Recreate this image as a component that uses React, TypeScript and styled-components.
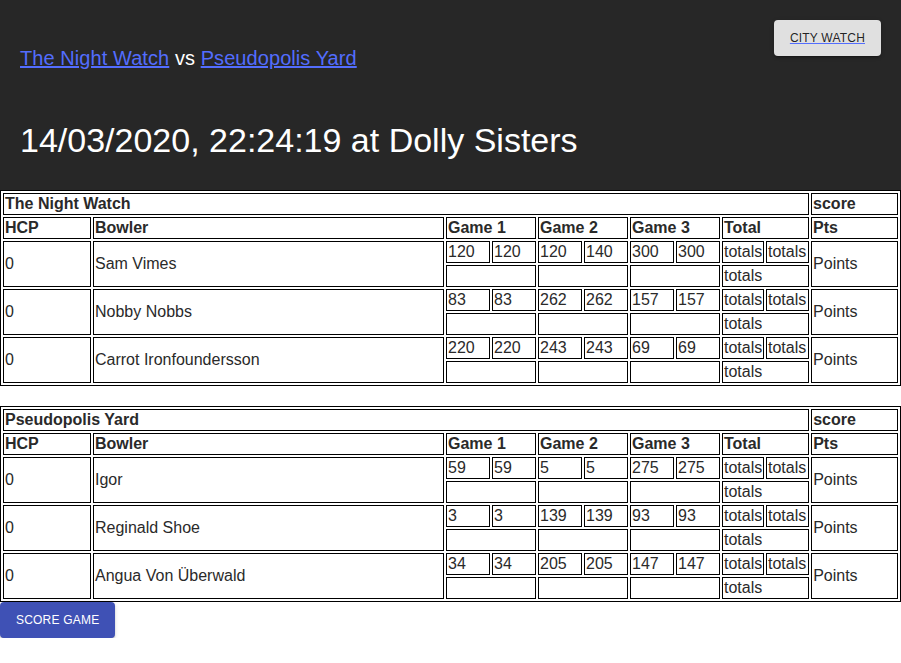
import React from "react";
import styled, { createGlobalStyle } from "styled-components";

const GlobalStyle = createGlobalStyle`
  html, body {
    margin: 0;
    padding: 0;
    background: #ffffff;
    font-family: "Liberation Sans", Arial, Helvetica, sans-serif;
  }
`;

const Header = styled.header`
  background: #272727;
  height: 190px;
  box-sizing: border-box;
  padding: 20px 20px 0 20px;
  display: flex;
  flex-direction: column;
`;

const TopRow = styled.div`
  display: flex;
  justify-content: space-between;
  align-items: flex-start;
`;

const MatchTitle = styled.h6`
  margin: 22px 0 0 0;
  font-size: 20px;
  line-height: 32px;
  font-weight: 400;
  letter-spacing: 0.07px;
  color: #ffffff;
`;

const TeamLink = styled.a`
  color: #536dfe;
  text-decoration: underline;
`;

const DateTitle = styled.h4`
  margin: 45px 0 0 0;
  font-size: 34px;
  line-height: 42px;
  font-weight: 400;
  color: #ffffff;
`;

const LightButton = styled.button`
  height: 36px;
  padding: 0 16px;
  border: none;
  border-radius: 4px;
  background: #e0e0e0;
  box-shadow: 0px 3px 1px -2px rgba(0, 0, 0, 0.2), 0px 2px 2px 0px rgba(0, 0, 0, 0.14),
    0px 1px 5px 0px rgba(0, 0, 0, 0.12);
  font-family: "Liberation Sans", Arial, sans-serif;
  font-size: 12px;
  letter-spacing: 0.2px;
  display: flex;
  align-items: center;
`;

const ButtonLink = styled.a`
  color: rgba(0, 0, 0, 0.87);
  text-decoration: underline;
  text-decoration-color: #536dfe;
`;

const PrimaryButton = styled.button`
  height: 36px;
  padding: 0 16px;
  border: none;
  border-radius: 4px;
  background: #3f51b5;
  color: #ffffff;
  box-shadow: 0px 3px 1px -2px rgba(0, 0, 0, 0.2), 0px 2px 2px 0px rgba(0, 0, 0, 0.14),
    0px 1px 5px 0px rgba(0, 0, 0, 0.12);
  font-family: "Liberation Sans", Arial, sans-serif;
  font-size: 12px;
  letter-spacing: 0.2px;
  display: flex;
  align-items: center;
`;

const ScoreTable = styled.table<{ $gap?: boolean }>`
  width: 100%;
  table-layout: fixed;
  border: 1px solid #000;
  border-spacing: 2px;
  margin-top: ${(p) => (p.$gap ? "20px" : "0")};
  font-size: 16px;
  color: #2a2a2a;
`;

const Head = styled.th`
  border: 1px solid #000;
  padding: 1px;
  text-align: left;
  font-weight: 700;
  line-height: 18px;
  white-space: nowrap;
  overflow: hidden;
`;

const Cell = styled.td`
  border: 1px solid #000;
  padding: 1px;
  line-height: 18px;
  height: 18px;
  white-space: nowrap;
  overflow: hidden;
`;

const colWidths = [88, 351, 44, 44, 44, 44, 44, 44, 42, 43, 87];

type Bowler = { name: string; games: [number, number][] };
type Team = { name: string; bowlers: Bowler[] };

const teams: Team[] = [
  {
    name: "The Night Watch",
    bowlers: [
      { name: "Sam Vimes", games: [[120, 120], [120, 140], [300, 300]] },
      { name: "Nobby Nobbs", games: [[83, 83], [262, 262], [157, 157]] },
      { name: "Carrot Ironfoundersson", games: [[220, 220], [243, 243], [69, 69]] },
    ],
  },
  {
    name: "Pseudopolis Yard",
    bowlers: [
      { name: "Igor", games: [[59, 59], [5, 5], [275, 275]] },
      { name: "Reginald Shoe", games: [[3, 3], [139, 139], [93, 93]] },
      { name: "Angua Von Überwald", games: [[34, 34], [205, 205], [147, 147]] },
    ],
  },
];

function TeamTable({ team, gap }: { team: Team; gap?: boolean }) {
  return (
    <ScoreTable $gap={gap}>
      <colgroup>
        {colWidths.map((w, i) => (
          <col key={i} style={{ width: w }} />
        ))}
      </colgroup>
      <thead>
        <tr>
          <Head colSpan={10}>{team.name}</Head>
          <Head>score</Head>
        </tr>
        <tr>
          <Head>HCP</Head>
          <Head>Bowler</Head>
          <Head colSpan={2}>Game 1</Head>
          <Head colSpan={2}>Game 2</Head>
          <Head colSpan={2}>Game 3</Head>
          <Head colSpan={2}>Total</Head>
          <Head>Pts</Head>
        </tr>
      </thead>
      <tbody>
        {team.bowlers.map((b) => (
          <React.Fragment key={b.name}>
            <tr>
              <Cell rowSpan={2}>0</Cell>
              <Cell rowSpan={2}>{b.name}</Cell>
              {b.games.map((g, gi) => (
                <React.Fragment key={gi}>
                  <Cell>{g[0]}</Cell>
                  <Cell>{g[1]}</Cell>
                </React.Fragment>
              ))}
              <Cell>totals</Cell>
              <Cell>totals</Cell>
              <Cell rowSpan={2}>Points</Cell>
            </tr>
            <tr>
              <Cell colSpan={2}></Cell>
              <Cell colSpan={2}></Cell>
              <Cell colSpan={2}></Cell>
              <Cell colSpan={2}>totals</Cell>
            </tr>
          </React.Fragment>
        ))}
      </tbody>
    </ScoreTable>
  );
}

export default function App() {
  return (
    <>
      <GlobalStyle />
      <Header>
        <TopRow>
          <MatchTitle>
            <TeamLink href="#">The Night Watch</TeamLink> vs{" "}
            <TeamLink href="#">Pseudopolis Yard</TeamLink>
          </MatchTitle>
          <LightButton>
            <ButtonLink href="#">CITY WATCH</ButtonLink>
          </LightButton>
        </TopRow>
        <DateTitle>14/03/2020, 22:24:19 at Dolly Sisters</DateTitle>
      </Header>
      <TeamTable team={teams[0]} />
      <TeamTable team={teams[1]} gap />
      <PrimaryButton>SCORE GAME</PrimaryButton>
    </>
  );
}
